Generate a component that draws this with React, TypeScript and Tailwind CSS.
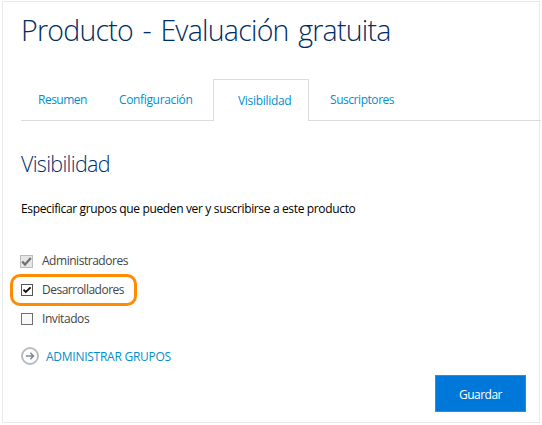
import React from "react";

type TabProps = { label: string; className: string; text: string };

function Tab({ label, className, text }: TabProps) {
  return (
    <a className={`flex h-[42px] shrink-0 items-center whitespace-nowrap pt-px text-[#0090cc] ${className}`}>
      <span className={text}>{label}</span>
    </a>
  );
}

function Check({ state }: { state: "disabled" | "on" | "off" }) {
  const frame =
    state === "disabled"
      ? "-ml-px h-[13px] w-[13px] border-[#bcbcbc] bg-[#e6e6e6]"
      : state === "on"
        ? "h-3 w-3 border-[#555] bg-white"
        : "h-3 w-3 border-[#707070] bg-[#f8f8f8]";
  return (
    <span className={`flex shrink-0 items-center justify-center border ${frame}`}>
      {state === "disabled" && (
        <svg width="11" height="11" viewBox="0 0 11 11" fill="none">
          <path d="M1.2 5.6 L4 8.6 L9.8 2" stroke="#707070" strokeWidth="2.2" />
        </svg>
      )}
      {state === "on" && (
        <svg width="10" height="10" viewBox="0 0 10 10" fill="none">
          <path d="M1.5 4.8 L3.8 7 L8.6 2.4" stroke="#111" strokeWidth="1.9" />
        </svg>
      )}
    </span>
  );
}

export default function App() {
  return (
    <div className="h-[425px] w-[542px] overflow-hidden bg-white pl-[2px] pt-px font-['Open_Sans','Noto_Sans',sans-serif] text-[12px]">
      <main className="flex h-[422px] w-[538px] flex-col border border-[#e9e9e9] pl-[18px]">
        <h1 className="mt-[7px] h-[42px] whitespace-nowrap text-[28.5px] font-light leading-[42px] tracking-[-0.75px] [word-spacing:2.8px] text-[#002d62]">
          Producto - Evaluación gratuita
        </h1>
        <nav className="mt-[28px] flex h-[42px] w-[520px]">
          <Tab label="Resumen" className="w-[98px] border-b border-[#dcdcdc] pl-[17px]" text="tracking-[-0.5px]" />
          <Tab label="Configuración" className="w-[94px] border-b border-[#dcdcdc]" text="tracking-[-0.35px]" />
          <Tab label="Visibilidad" className="w-[96px] border-x border-t border-[#dcdcdc] pl-[24px]" text="tracking-[-0.3px]" />
          <Tab label="Suscriptores" className="w-[232px] border-b border-[#dcdcdc] pl-[21px]" text="tracking-[-0.45px]" />
        </nav>
        <h2 className="mt-[27px] h-[32px] text-[21.5px] font-light leading-[32px] tracking-[-0.7px] text-[#00306c]">Visibilidad</h2>
        <p className="mt-[20px] h-[18px] whitespace-nowrap leading-[18px] tracking-[-0.35px] text-black">
          Especificar grupos que pueden ver y suscribirse a este producto
        </p>
        <div className="mt-[33px] flex h-[20px] items-center gap-[9px] text-[#444]">
          <Check state="disabled" />
          <span className="tracking-[-0.47px]">Administradores</span>
        </div>
        <div className="-ml-[11px] mt-[3px] flex h-[32px] w-[127px] items-center gap-[9px] rounded-[10px] border-[3px] border-[#ff8c00] pl-[8px] text-[#444]">
          <Check state="on" />
          <span className="tracking-[-0.5px]">Desarrolladores</span>
        </div>
        <div className="mt-[3px] flex h-[20px] items-center gap-[9px] text-[#444]">
          <Check state="off" />
          <span className="tracking-[-0.42px]">Invitados</span>
        </div>
        <a className="mt-[18px] flex h-[18px] items-center gap-[7px] text-[#0090cc]">
          <svg width="18" height="18" viewBox="0 0 18 18" fill="none">
            <circle cx="9" cy="9" r="8" stroke="#b5bcc4" strokeWidth="1.9" />
            <path d="M4.8 9H12.5M9.3 5.8L12.5 9L9.3 12.2" stroke="#7c8894" strokeWidth="1.5" />
          </svg>
          <span className="pt-[2px] tracking-[-0.26px]">ADMINISTRAR GRUPOS</span>
        </a>
        <button className="ml-[414px] mt-[10px] h-[37px] w-[91px] border border-[#2b8ee0] bg-[#0078d9] pt-[2px] text-white">
          <span className="tracking-[-0.5px]">Guardar</span>
        </button>
      </main>
    </div>
  );
}
